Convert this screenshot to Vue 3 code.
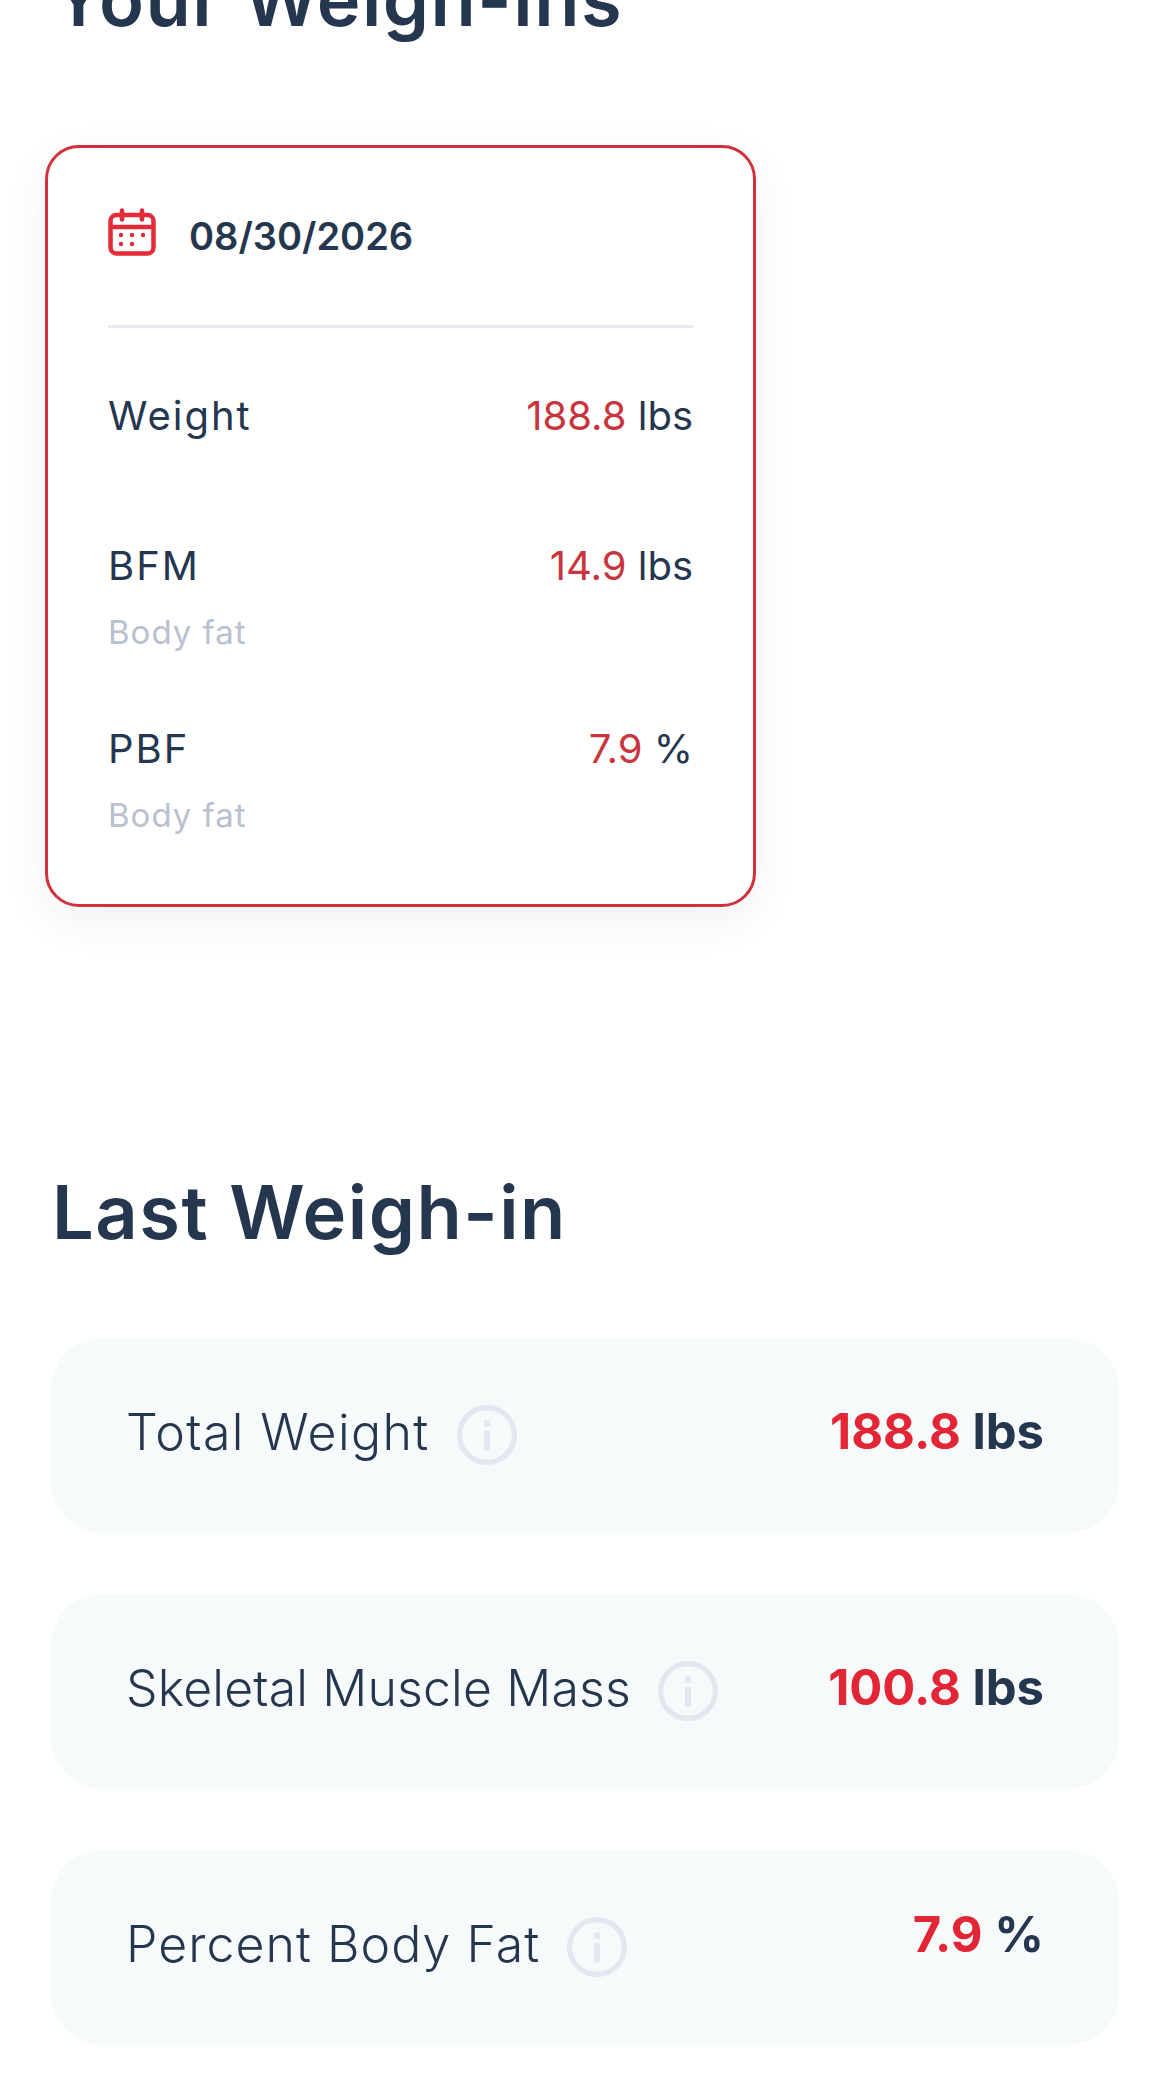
<template>
  <div class="page">
    <h2 class="heading top-heading">Your Weigh-ins</h2>

    <div class="weigh-card">
      <div class="card-date">
        <svg class="cal-icon" viewBox="0 0 48 48" fill="none">
          <rect x="2.5" y="7" width="43" height="38.5" rx="6" stroke="#e32a36" stroke-width="4.5" />
          <path d="M2.5 19h43" stroke="#e32a36" stroke-width="4.5" />
          <path d="M14 2.5v9M34 2.5v9" stroke="#e32a36" stroke-width="4.5" stroke-linecap="round" />
          <g fill="#e32a36">
            <circle cx="13" cy="27" r="2.2" />
            <circle cx="24" cy="27" r="2.2" />
            <circle cx="35" cy="27" r="2.2" />
            <circle cx="13" cy="36" r="2.2" />
            <circle cx="24" cy="36" r="2.2" />
          </g>
        </svg>
        <span class="date-text">08/30/2026</span>
      </div>

      <div class="card-rows">
        <div v-for="stat in cardStats" :key="stat.name" class="card-row">
          <div class="row-main">
            <span class="stat-name">{{ stat.name }}</span>
            <span class="stat-value"><em>{{ stat.value }}</em> {{ stat.unit }}</span>
          </div>
          <div v-if="stat.note" class="stat-note">{{ stat.note }}</div>
        </div>
      </div>
    </div>

    <h2 class="heading last-heading">Last Weigh-in</h2>

    <div class="last-list">
      <div v-for="item in lastStats" :key="item.name" class="last-row">
        <div class="last-label">
          <span :style="{ letterSpacing: item.track + 'px' }">{{ item.name }}</span>
          <svg class="info-icon" viewBox="0 0 58 58" fill="none">
            <circle cx="29" cy="29" r="26.5" stroke="#e1e8f0" stroke-width="5" />
            <rect x="26" y="15" width="6" height="6" fill="#e1e8f0" />
            <rect x="26" y="25" width="6" height="19" fill="#e1e8f0" />
          </svg>
        </div>
        <div class="last-value" :class="{ raised: item.unit === '%' }">
          <em>{{ item.value }}</em> {{ item.unit }}
        </div>
      </div>
    </div>
  </div>
</template>

<script setup>
const cardStats = [
  { name: 'Weight', value: '188.8', unit: 'lbs' },
  { name: 'BFM', value: '14.9', unit: 'lbs', note: 'Body fat' },
  { name: 'PBF', value: '7.9', unit: '%', note: 'Body fat' }
]

const lastStats = [
  { name: 'Total Weight', value: '188.8', unit: 'lbs', track: 1.4 },
  { name: 'Skeletal Muscle Mass', value: '100.8', unit: 'lbs', track: 0.15 },
  { name: 'Percent Body Fat', value: '7.9', unit: '%', track: 1.05 }
]
</script>

<style scoped>
.page {
  width: 1170px;
  height: 2080px;
  overflow: hidden;
  box-sizing: border-box;
  background: #ffffff;
  color: #25364f;
  font-family: Inter, "Liberation Sans", sans-serif;
}

.heading {
  margin: 0;
  font-size: 74px;
  line-height: 88px;
  font-weight: 600;
  color: #25364f;
  padding-left: 52px;
  letter-spacing: 1.5px;
}

.top-heading {
  margin-top: -45px;
}

.weigh-card {
  box-sizing: border-box;
  width: 711px;
  height: 762px;
  margin: 102px 0 0 45px;
  padding: 0 60px;
  background: #fff;
  border: 3px solid #d0323c;
  border-radius: 34px;
  box-shadow: 0 14px 44px rgba(30, 50, 80, 0.07);
}

.card-date {
  display: flex;
  align-items: center;
  gap: 33px;
  height: 177px;
  border-bottom: 3px solid #e9ebf0;
}

.cal-icon {
  width: 48px;
  height: 48px;
  margin-bottom: 10px;
}

.date-text {
  font-size: 38px;
  font-weight: 600;
  color: #25364f;
  margin-bottom: 2px;
}

.card-rows {
  display: flex;
  flex-direction: column;
  padding-top: 65px;
}

.card-row {
  height: 150px;
}

.card-row:nth-child(2) {
  height: 183px;
}

.row-main {
  display: flex;
  justify-content: space-between;
  align-items: center;
  font-size: 40px;
  line-height: 46px;
  color: #25364f;
}

.stat-name {
  letter-spacing: 2px;
}

.stat-value em {
  font-style: normal;
  color: #c9353d;
}

.stat-note {
  margin-top: 23px;
  font-size: 33px;
  line-height: 40px;
  letter-spacing: 1px;
  color: #b9c0d0;
}

.last-heading {
  margin-top: 261px;
}

.last-list {
  display: flex;
  flex-direction: column;
  gap: 61px;
  margin: 82px 51px 0 51px;
}

.last-row {
  display: flex;
  justify-content: space-between;
  align-items: center;
  height: 195px;
  padding: 0 75px;
  box-sizing: border-box;
  background: #f7fafb;
  border-radius: 52px;
}

.last-label {
  display: flex;
  align-items: center;
  gap: 27px;
  font-size: 50px;
  font-weight: 300;
  color: #25364f;
  margin-bottom: 8px;
}

.info-icon {
  width: 60px;
  height: 60px;
  margin-top: 6px;
}

.last-value {
  font-size: 49px;
  font-weight: 700;
  color: #25364f;
  margin-bottom: 9px;
}

.last-value.raised {
  margin-bottom: 27px;
}

.last-value em {
  font-style: normal;
  color: #e32636;
}
</style>

<style>
html,
body {
  margin: 0;
  overflow: hidden;
  background: #ffffff;
}
</style>
